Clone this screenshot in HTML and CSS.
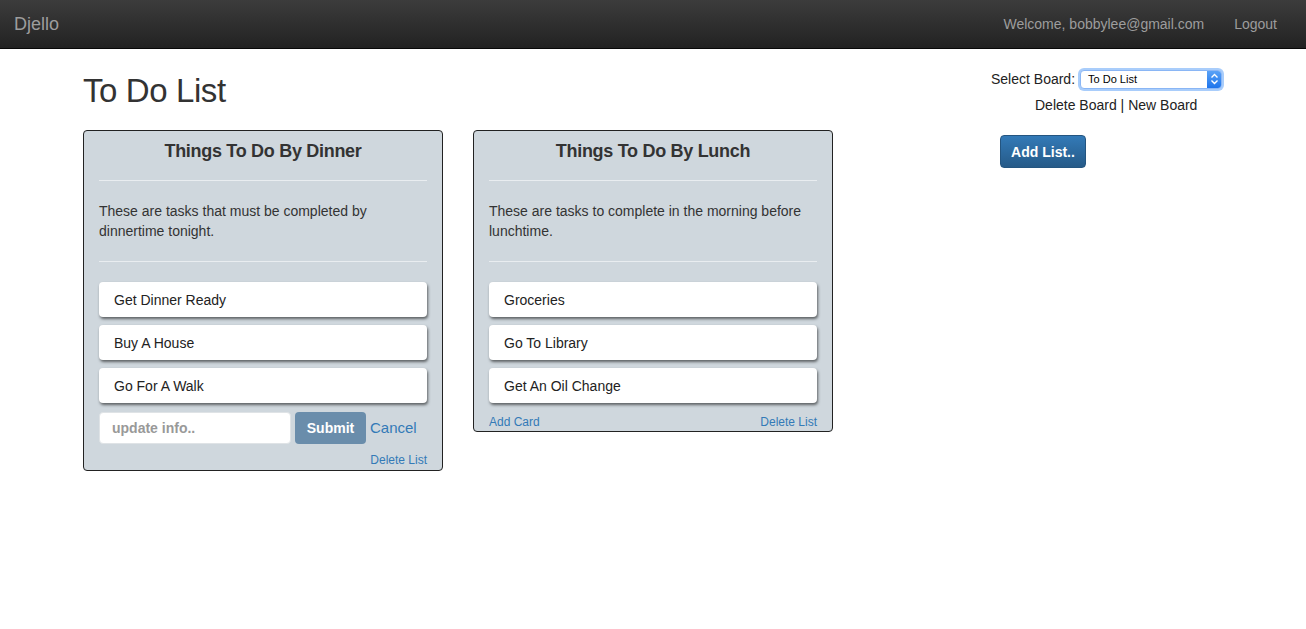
FILE: index.html
```html
<!DOCTYPE html>
<html>
<head>
<meta charset="utf-8">
<link rel="stylesheet" href="styles.css">
</head>
<body>
<nav class="navbar">
  <a class="brand">Djello</a>
  <div class="nav-right">
    <span class="nav-item">Welcome, bobbylee@gmail.com</span>
    <a class="nav-item">Logout</a>
  </div>
</nav>
<main class="container">
  <section class="board">
    <h1 class="board-title">To Do List</h1>
    <div class="lists">
      <div class="list">
        <h3 class="list-title">Things To Do By Dinner</h3>
        <hr class="divider first">
        <p class="list-desc">These are tasks that must be completed by dinnertime tonight.</p>
        <hr class="divider">
        <div class="card">Get Dinner Ready</div>
        <div class="card">Buy A House</div>
        <div class="card">Go For A Walk</div>
        <div class="card-form">
          <span class="input">update info..</span>
          <span class="btn-submit">Submit</span>
          <a class="cancel">Cancel</a>
        </div>
        <div class="list-footer end">
          <a class="small-link">Delete List</a>
        </div>
      </div>
      <div class="list">
        <h3 class="list-title">Things To Do By Lunch</h3>
        <hr class="divider first">
        <p class="list-desc">These are tasks to complete in the morning before lunchtime.</p>
        <hr class="divider">
        <div class="card">Groceries</div>
        <div class="card">Go To Library</div>
        <div class="card">Get An Oil Change</div>
        <div class="list-footer">
          <a class="small-link">Add Card</a>
          <a class="small-link">Delete List</a>
        </div>
      </div>
    </div>
  </section>
  <aside class="sidebar">
    <div class="select-row">
      <span class="select-label">Select Board:</span>
      <span class="select">
        <span class="select-text">To Do List</span>
        <span class="select-arrow">
          <svg width="9" height="12" viewBox="0 0 9 12"><path d="M1.5 4.5 L4.5 1.5 L7.5 4.5 M1.5 7.5 L4.5 10.5 L7.5 7.5" fill="none" stroke="#fff" stroke-width="1.4"/></svg>
        </span>
      </span>
    </div>
    <div class="board-links"><a>Delete Board</a> | <a>New Board</a></div>
    <span class="btn-add">Add List..</span>
  </aside>
</main>
</body>
</html>
```

FILE: styles.css
```css
* { box-sizing: border-box; }
body {
  margin: 0;
  font-family: "Liberation Sans", Helvetica, Arial, sans-serif;
  font-size: 14px;
  line-height: 20px;
  color: #333;
  background: #fff;
}
a { cursor: pointer; }
.navbar {
  height: 49px;
  background: linear-gradient(to bottom, #3c3c3c, #222222);
  border-bottom: 1px solid #080808;
  display: flex;
  align-items: center;
  justify-content: space-between;
  padding: 0 29px 0 14px;
}
.brand {
  color: #9d9d9d;
  font-size: 18px;
}
.nav-right {
  display: flex;
  gap: 30px;
}
.nav-item {
  color: #9d9d9d;
  font-size: 14px;
}
.container {
  width: 1170px;
  margin: 0 auto;
  padding: 22px 15px 0;
  display: flex;
  justify-content: space-between;
}
.board-title {
  margin: 0 0 19px;
  font-size: 33px;
  letter-spacing: -0.4px;
  line-height: 40px;
  font-weight: 500;
  color: #333;
}
.lists {
  display: flex;
  align-items: flex-start;
  gap: 30px;
}
.list {
  width: 360px;
  background: #cfd7dd;
  border: 1px solid #222;
  border-radius: 4px;
  padding: 10px 15px 0;
}
.list-title {
  margin: 0;
  text-align: center;
  font-size: 18px;
  letter-spacing: -0.3px;
  line-height: 20px;
  font-weight: bold;
  color: #333;
}
.divider {
  border: 0;
  border-top: 1px solid #e9edf0;
  margin: 20px 0 20px;
}
.divider.first {
  margin-top: 19px;
}
.list-desc {
  margin: 0;
  color: #333;
}
.card {
  height: 35px;
  background: #fff;
  border-radius: 4px;
  box-shadow: 1px 2px 3px rgba(0, 0, 0, 0.55);
  padding: 0 15px;
  display: flex;
  align-items: center;
  margin-bottom: 8px;
  color: #222;
}
.card-form {
  display: flex;
  align-items: center;
  height: 32px;
  margin-top: 9px;
}
.input {
  width: 192px;
  height: 32px;
  background: #fff;
  border-radius: 4px;
  border: 1px solid #dfe3e6;
  color: #999;
  font-weight: bold;
  padding: 0 12px;
  display: flex;
  align-items: center;
}
.btn-submit {
  margin-left: 4px;
  width: 71px;
  height: 32px;
  background: #6a8dab;
  border-radius: 4px;
  color: #fff;
  font-weight: bold;
  display: flex;
  align-items: center;
  justify-content: center;
}
.cancel {
  margin-left: 4px;
  color: #337ab7;
  font-size: 15px;
  margin-top: -1px;
}
.list-footer {
  display: flex;
  justify-content: space-between;
  font-size: 12px;
  line-height: 17px;
  padding-top: 3px;
}
.list-footer.end {
  justify-content: flex-end;
  margin-top: 5px;
  padding-bottom: 1px;
}
.small-link { color: #337ab7; }
.sidebar {
  width: 232px;
  padding-top: 1px;
}
.select-row {
  display: flex;
  align-items: center;
  height: 20px;
  margin-top: -3px;
}
.select-label {
  color: #222;
  margin-right: 5px;
}
.select {
  width: 142px;
  height: 19px;
  border-radius: 4px;
  background: #fff;
  border: 1px solid #8ab6f5;
  box-shadow: 0 0 0 2px #a9cdfb;
  display: flex;
  align-items: stretch;
  overflow: hidden;
}
.select-text {
  flex: 1;
  font-size: 11px;
  line-height: 17px;
  color: #000;
  padding-left: 7px;
}
.select-arrow {
  width: 14px;
  background: linear-gradient(to bottom, #5aa2f6, #1d74ec);
  display: flex;
  align-items: center;
  justify-content: center;
}
.board-links {
  margin: 6px 0 0 44px;
  color: #222;
}
.btn-add {
  display: inline-flex;
  align-items: center;
  justify-content: center;
  margin: 20px 0 0 9px;
  width: 86px;
  height: 33px;
  border-radius: 4px;
  border: 1px solid #245580;
  background: linear-gradient(to bottom, #337ab7, #265a88);
  color: #fff;
  font-weight: bold;
}
```
